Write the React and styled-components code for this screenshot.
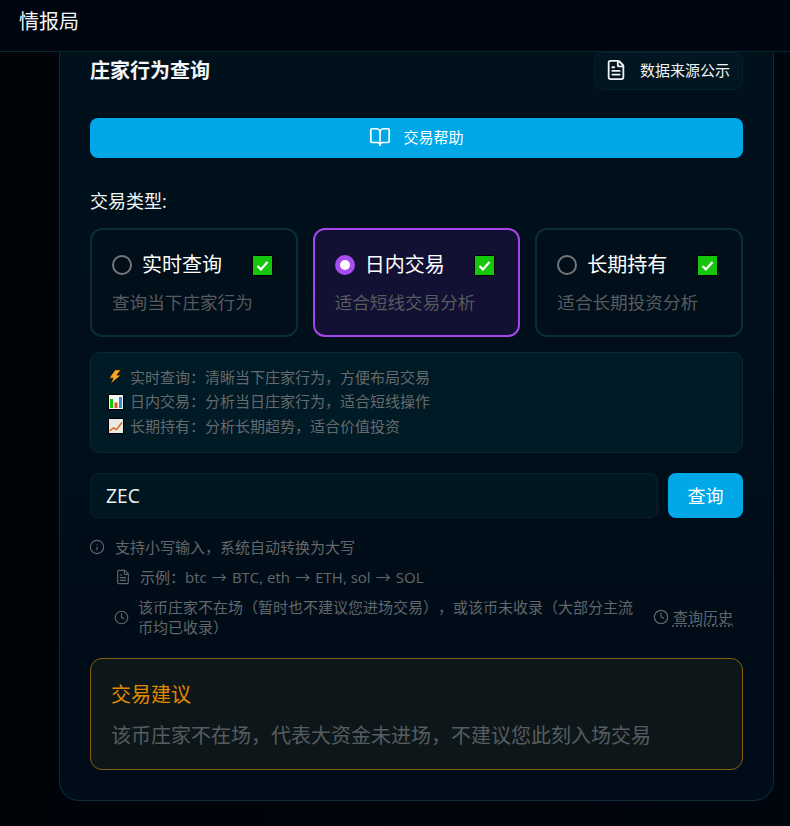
import React, { useState } from 'react';
import styled, { createGlobalStyle } from 'styled-components';
import { FileText, BookOpen, Info, Clock } from 'lucide-react';

const GlobalStyle = createGlobalStyle`
	html, body {
		margin: 0;
		padding: 0;
		background: #00050d;
		overflow: hidden;
	}
	* {
		box-sizing: border-box;
	}
	body {
		font-family: "Open Sans", "Noto Sans CJK SC", sans-serif;
		color: #fff;
		text-spacing-trim: space-all;
	}
`;

const Page = styled.div`
	width: 790px;
	height: 826px;
	display: flex;
	flex-direction: column;
	background: linear-gradient(90deg, #000308 0%, #00060e 100%);
`;

const Header = styled.header`
	height: 52px;
	flex-shrink: 0;
	padding: 8px 19px 0;
	background: #00060f;
	border-bottom: 1px solid #0b252e;
	font-size: 20px;
	line-height: 28px;
	color: #f2f5f7;
`;

const Card = styled.main`
	width: 715px;
	height: 749px;
	margin-left: 59px;
	padding: 0 30px;
	background: linear-gradient(180deg, #00111c 0%, #000c18 100%);
	border: 1px solid #0a2d38;
	border-top: none;
	border-radius: 0 0 20px 20px;
`;

const TitleRow = styled.div`
	display: flex;
	align-items: center;
	justify-content: space-between;
	height: 38px;
`;

const Title = styled.h2`
	margin: 0;
	padding-bottom: 4px;
	font-size: 20px;
	font-weight: 700;
	color: #f4f6f7;
`;

const SourceButton = styled.button`
	display: flex;
	align-items: center;
	gap: 13px;
	width: 149px;
	height: 38px;
	padding: 0 0 3px 10px;
	background: #011620;
	border: 1px solid #04202a;
	border-radius: 9px;
	color: #f0f3f5;
	font: inherit;
	font-size: 15px;
	white-space: nowrap;
`;

const HelpButton = styled.button`
	display: flex;
	align-items: center;
	justify-content: center;
	gap: 12px;
	width: 100%;
	height: 40px;
	margin-top: 28px;
	padding: 0 0 3px;
	background: #00a8e8;
	border: none;
	border-radius: 8px;
	color: #fff;
	font: inherit;
	font-size: 15px;
`;

const SectionLabel = styled.div`
	margin-top: 30px;
	font-size: 18px;
	line-height: 26px;
	color: #f2f5f7;
`;

const TypeGrid = styled.div`
	display: grid;
	grid-template-columns: repeat(3, 1fr);
	gap: 15px;
	margin-top: 14px;
`;

const TypeCard = styled.div`
	height: 109px;
	padding: 20px;
	background: ${p => (p.$active ? '#121033' : '#000f1a')};
	border: 2px solid ${p => (p.$active ? '#a347e8' : '#0a2d38')};
	border-radius: 12px;
`;

const TypeHead = styled.div`
	display: flex;
	align-items: center;
	height: 30px;
`;

const Radio = styled.span`
	width: 20px;
	height: 20px;
	flex-shrink: 0;
	border-radius: 50%;
	background: ${p => (p.$active ? '#fff' : 'transparent')};
	border: ${p => (p.$active ? '5px solid #a64cf0' : '2px solid #74787b')};
`;

const TypeName = styled.span`
	margin-left: 10px;
	font-size: 20px;
	line-height: 30px;
	color: #fff;
`;

const TickBox = styled.svg`
	width: 21px;
	height: 21px;
	margin-left: auto;
	margin-right: 3px;
	flex-shrink: 0;
`;

const TypeDesc = styled.div`
	margin-top: 9px;
	font-size: 17.6px;
	line-height: 26px;
	color: #565b5f;
	white-space: nowrap;
`;

const InfoPanel = styled.div`
	height: 101px;
	margin-top: 15px;
	padding: 11px 17px 0;
	background: #001a26;
	border: 1px solid #0a2a35;
	border-radius: 10px;
`;

const InfoLine = styled.div`
	display: flex;
	align-items: center;
	gap: 6px;
	height: 24.5px;
	font-size: 15px;
	color: #656a6c;
`;

const Emoji = styled.svg`
	width: 16px;
	height: 16px;
	margin-top: 2px;
	flex-shrink: 0;
`;

const SearchRow = styled.div`
	display: flex;
	gap: 10px;
	margin-top: 20px;
`;

const SearchInput = styled.input`
	flex: 1;
	min-width: 0;
	height: 45px;
	padding: 0 15px;
	background: #001621;
	border: 1px solid #06242f;
	border-radius: 8px;
	color: #eef1f2;
	font: inherit;
	font-size: 19.2px;
	outline: none;
`;

const SearchButton = styled.button`
	width: 75px;
	height: 45px;
	padding: 0 0 2px;
	background: #00a8e8;
	border: none;
	border-radius: 8px;
	color: #fff;
	font: inherit;
	font-size: 18px;
`;

const Hints = styled.div`
	margin-top: 14px;
	color: #62676a;
	font-size: 15px;
`;

const HintRow = styled.div`
	display: flex;
	align-items: center;
	gap: ${p => p.$gap || 10}px;
	height: ${p => p.$h || 30}px;
	padding-left: ${p => p.$indent || 0}px;
	line-height: 20px;
`;

const Arrow = styled.span`
	margin: 0 1.2px;
	font-family: "Noto Sans CJK SC", sans-serif;
`;

const HintText = styled.span`
	flex: 1;
	color: #62676a;
`;

const HistoryLink = styled.span`
	display: flex;
	align-items: center;
	gap: 4px;
	flex-shrink: 0;
	margin: 0 10px 0 8px;
	white-space: nowrap;
	color: #62676a;
`;

const Dotted = styled.span`
	text-decoration: underline dotted;
	text-underline-offset: 3px;
`;

const Advice = styled.section`
	height: 112px;
	margin-top: 16px;
	padding: 21px 20px 0;
	background: #0d1719;
	border: 1px solid #86600f;
	border-radius: 12px;
`;

const AdviceTitle = styled.div`
	font-size: 20px;
	line-height: 30px;
	color: #e08a00;
`;

const AdviceText = styled.div`
	margin-top: 10px;
	font-size: 20px;
	line-height: 32px;
	color: #565d61;
	white-space: nowrap;
`;

const Tick = () => (
	<TickBox viewBox="0 0 21 21">
		<rect x="0.5" y="0.5" width="20" height="20" rx="1" fill="#16c60c" stroke="#000" />
		<path d="M5.5 11l3.4 3.4L15.5 7" fill="none" stroke="#fff" strokeWidth="2.2" />
	</TickBox>
);

const Bolt = () => (
	<Emoji viewBox="0 0 16 16">
		<path d="M7 0.8L1 9.2h4L2.4 15l11-9H9l4.2-5.2z" fill="#f7a823" stroke="#1a1205" strokeWidth="0.9" strokeLinejoin="round" />
	</Emoji>
);

const BarChart = () => (
	<Emoji viewBox="0 0 16 16">
		<rect x="0.5" y="0.5" width="15" height="15" fill="#f4f4f4" stroke="#000" />
		<rect x="2" y="5" width="3" height="9" fill="#16c60c" />
		<rect x="6.5" y="8.5" width="3" height="5.5" fill="#d9601a" />
		<rect x="11" y="3" width="3" height="11" fill="#2f8fd8" />
	</Emoji>
);

const LineChart = () => (
	<Emoji viewBox="0 0 16 16">
		<rect x="0.5" y="0.5" width="15" height="15" fill="#e9eae2" stroke="#000" />
		<path d="M1.5 13l4-3 3 1.5 5.5-7" fill="none" stroke="#e0662a" strokeWidth="1.5" />
	</Emoji>
);

const types = [
	{ name: '实时查询', desc: '查询当下庄家行为' },
	{ name: '日内交易', desc: '适合短线交易分析' },
	{ name: '长期持有', desc: '适合长期投资分析' },
];

const App = () => {
	const [code, setCode] = useState('ZEC');

	return (
		<Page>
			<GlobalStyle />
			<Header>情报局</Header>
			<Card>
				<TitleRow>
					<Title>庄家行为查询</Title>
					<SourceButton>
						<FileText size={22} strokeWidth={2} />
						数据来源公示
					</SourceButton>
				</TitleRow>
				<HelpButton>
					<BookOpen size={22} strokeWidth={1.8} />
					交易帮助
				</HelpButton>
				<SectionLabel>交易类型:</SectionLabel>
				<TypeGrid>
					{types.map((t, i) => (
						<TypeCard key={t.name} $active={i === 1}>
							<TypeHead>
								<Radio $active={i === 1} />
								<TypeName>{t.name}</TypeName>
								<Tick />
							</TypeHead>
							<TypeDesc>{t.desc}</TypeDesc>
						</TypeCard>
					))}
				</TypeGrid>
				<InfoPanel>
					<InfoLine><Bolt />实时查询：清晰当下庄家行为，方便布局交易</InfoLine>
					<InfoLine><BarChart />日内交易：分析当日庄家行为，适合短线操作</InfoLine>
					<InfoLine><LineChart />长期持有：分析长期超势，适合价值投资</InfoLine>
				</InfoPanel>
				<SearchRow>
					<SearchInput value={code} onChange={e => setCode(e.target.value)} />
					<SearchButton>查询</SearchButton>
				</SearchRow>
				<Hints>
					<HintRow $gap={10}>
						<Info size={16} strokeWidth={1.7} style={{ marginLeft: -1 }} />
						<span>支持小写输入，系统自动转换为大写</span>
					</HintRow>
					<HintRow $indent={25} $gap={9}>
						<FileText size={16} strokeWidth={1.7} />
						<span>示例：btc <Arrow>→</Arrow> BTC, eth <Arrow>→</Arrow> ETH, sol <Arrow>→</Arrow> SOL</span>
					</HintRow>
					<HintRow $indent={24} $gap={9} $h={50}>
						<Clock size={15} strokeWidth={1.8} />
						<HintText>该币庄家不在场（暂时也不建议您进场交易），或该币未收录（大部分主流币均已收录）</HintText>
						<HistoryLink>
							<Clock size={16} strokeWidth={1.8} />
							<Dotted>查询历史</Dotted>
						</HistoryLink>
					</HintRow>
				</Hints>
				<Advice>
					<AdviceTitle>交易建议</AdviceTitle>
					<AdviceText>该币庄家不在场，代表大资金未进场，不建议您此刻入场交易</AdviceText>
				</Advice>
			</Card>
		</Page>
	);
};

export default App;
